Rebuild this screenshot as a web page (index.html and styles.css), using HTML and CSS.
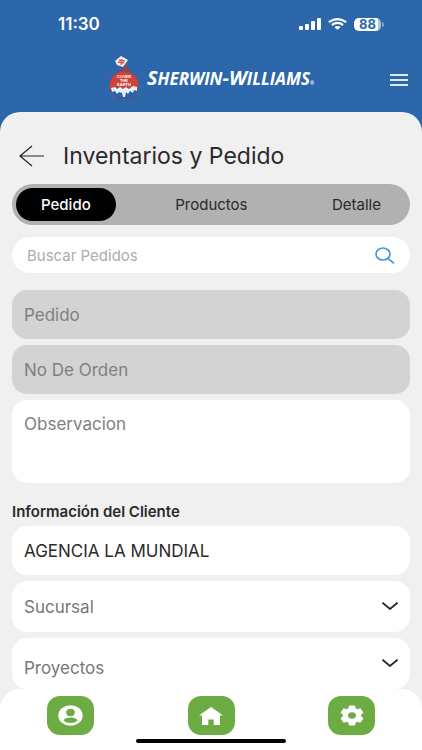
FILE: index.html
```html
<!DOCTYPE html>
<html lang="es">
<head>
<meta charset="utf-8">
<meta name="viewport" content="width=device-width, initial-scale=1">
<title>Inventarios y Pedido</title>
<link rel="stylesheet" href="styles.css">
</head>
<body>
<header class="header">
  <div class="status">
    <span class="time">11:30</span>
    <div class="indicators">
      <svg width="22" height="12" viewBox="0 0 22 12" fill="#fff" aria-hidden="true"><rect x="0" y="8" width="4" height="4" rx="1"/><rect x="6" y="6" width="4" height="6" rx="1"/><rect x="12" y="3" width="4" height="9" rx="1"/><rect x="18" y="0" width="4" height="12" rx="1"/></svg>
      <svg width="19" height="12" viewBox="0 0 19 12" fill="none" stroke="#fff" stroke-width="2.2" aria-hidden="true"><path d="M.8 4.2Q9.500-2 18.200 4.200M3.900 7Q9.500 2.800 15.100 7"/><path d="M6.300 9Q9.500 6.800 12.700 9L9.500 11.800Z" fill="#fff" stroke="none"/></svg>
      <span class="battery">88</span>
    </div>
  </div>
  <div class="brand-row">
    <div class="brand">
      <svg class="emblem" width="32" height="48" viewBox="0 0 32 48" aria-hidden="true">
        <path d="M8 19Q8 14 14 14L16 9 20 9 19 14Q24 14 24 19Z" fill="#8c4660"/>
        <path d="M7 5 13 0 20 4 15 11 9 9Z" fill="#f2eef1"/>
        <path d="M11 4 17 5M10 6 16 7M14 3 13 9" stroke="#cf5b58" stroke-width="1.300"/>
        <circle cx="16" cy="30" r="14" fill="#2464ad" stroke="#6f4f7a"/>
        <path d="M1.500 33Q1 20 10 17Q16 14 23 17Q32 22 30.500 33L27 31 23 33 19 31 14 33 9 31 5 33Z" fill="#cf4236"/>
        <path d="M3 32 7 31 9 33 12 31 15 33 18 31 21 33 25 30 29 31 29 35 26 34 25 37 22 35 20 38 18 36 17 41 15 41 14 37 11 36 9 38 7 35 4 36Z" fill="#e8f0f7"/>
        <path d="M2 36V43M6 40V46M9 43V46M24 43V46M29 37V44" stroke="#5b5a8a"/>
        <g fill="#fff" class="emblem-text" text-anchor="middle"><text x="16" y="22">COVER</text><text x="16" y="26">THE</text><text x="16" y="30">EARTH</text></g>
      </svg>
      <span class="wordmark"><span class="cap">S</span>HERWIN<span class="cap">-W</span>ILLIAMS<span class="dot">®</span></span>
    </div>
    <button class="icon-button" type="button" aria-label="Menú">
      <svg width="18" height="12" viewBox="0 0 18 12" stroke="#dce9f7" stroke-width="2"><path d="M0 1H18M0 6H18M0 11H18"/></svg>
    </button>
  </div>
</header>

<main class="main">
  <div class="title-row">
    <button class="icon-button" type="button" aria-label="Volver">
      <svg width="26" height="22" viewBox="0 0 26 22" fill="none" stroke="#222" stroke-width="1.200"><path d="M25 11H1M13 1 1 11 13 21"/></svg>
    </button>
    <h1 class="title">Inventarios y Pedido</h1>
  </div>

  <div class="tabs">
    <button class="tab active" type="button">Pedido</button>
    <button class="tab" type="button">Productos</button>
    <button class="tab" type="button">Detalle</button>
  </div>

  <div class="search">
    <input class="search-input" type="search" placeholder="Buscar Pedidos" aria-label="Buscar Pedidos">
    <button class="icon-button" type="button" aria-label="Buscar">
      <svg width="20" height="17" viewBox="0 0 20 17" fill="none" stroke="#4599dc" stroke-width="1.700"><ellipse cx="8" cy="7" rx="7" ry="6"/><path d="M13 11.500 19 16.300"/></svg>
    </button>
  </div>

  <form class="form">
    <input class="field" type="text" placeholder="Pedido" aria-label="Pedido" disabled>
    <input class="field" type="text" placeholder="No De Orden" aria-label="No De Orden" disabled>
    <textarea class="field area" placeholder="Observacion" aria-label="Observacion"></textarea>
    <h2 class="section"><label for="client">Información del Cliente</label></h2>
    <input class="field" id="client" type="text" value="AGENCIA LA MUNDIAL">
    <div class="select-wrap">
      <select class="field select" aria-label="Sucursal"><option>Sucursal</option></select>
      <svg class="chevron" width="16" height="8" viewBox="0 0 16 8" fill="none" stroke="#222" stroke-width="1.700"><path d="M.5 .7 8 7 15.500 .7"/></svg>
    </div>
    <div class="select-wrap">
      <select class="field select lowered" aria-label="Proyectos"><option>Proyectos</option></select>
      <svg class="chevron" width="16" height="8" viewBox="0 0 16 8" fill="none" stroke="#222" stroke-width="1.700"><path d="M.5 .7 8 7 15.500 .7"/></svg>
    </div>
  </form>
</main>

<nav class="nav">
  <div class="nav-items">
    <a class="nav-link" href="#" aria-label="Perfil"><svg width="25" height="21" viewBox="0 0 25 21"><ellipse cx="12.500" cy="10.500" rx="12.200" ry="10.200" fill="#fff"/><ellipse cx="12.500" cy="7.500" rx="4.300" ry="3.700" fill="#6cac42"/><path d="M5.500 15.400Q7 12.600 12.500 12.600T19.500 15.400Q17 18 12.500 18T5.500 15.400Z" fill="#6cac42"/></svg></a>
    <a class="nav-link" href="#" aria-label="Inicio"><svg width="24" height="18" viewBox="0 0 24 18" fill="#fff"><path d="M12 0 24 8.500H21V18H14.700V12.500H9.300V18H3V8.500H0Z"/></svg></a>
    <a class="nav-link" href="#" aria-label="Ajustes"><svg width="24" height="21" viewBox="0 0 24 21" fill="#fff" stroke="#fff" stroke-linejoin="round"><path fill-rule="evenodd" d="M9.300 1H14.700L15.300 3.700 17.300 4.700 20.300 3.700 23 7.800 20.700 9.500V11.500L23 13.200 20.300 17.300 17.300 16.300 15.300 17.300 14.700 20H9.300L8.700 17.300 6.700 16.300 3.700 17.300 1 13.200 3.300 11.500V9.500L1 7.800 3.700 3.700 6.700 4.700 8.700 3.700Z"/><ellipse cx="12" cy="10.500" rx="3.900" ry="3.300" fill="#6cac42" stroke="none"/></svg></a>
  </div>
  <div class="home-bar"></div>
</nav>
</body>
</html>
```
FILE: styles.css
```css
* { box-sizing: border-box; }

body {
  margin: 0;
  min-height: 100vh;
  display: flex;
  flex-direction: column;
  background: #f0f0f0;
  color: #2a2a2a;
  font-family: Inter, "Liberation Sans", sans-serif;
}

button, input, select, textarea { font: inherit; color: inherit; }

.header {
  padding: 14px 14px 28px 14px;
  background: #2b67aa;
  color: #fff;
}

.status {
  display: flex;
  justify-content: space-between;
  align-items: center;
  height: 20px;
  padding: 0 24px 0 44px;
}

.time { font-size: 17px; font-weight: 600; }

.indicators { display: flex; align-items: center; gap: 7px; }

.battery {
  position: relative;
  width: 27px;
  margin-right: 3px;
  border-radius: 5px;
  background: linear-gradient(90deg, #fff 88%, #a9c3e0 88%);
  color: #2b67aa;
  font-size: 13px;
  font-weight: 700;
  line-height: 13px;
  text-align: center;
}

.battery::after {
  content: "";
  position: absolute;
  top: 4px;
  right: -3px;
  width: 2px;
  height: 5px;
  border-radius: 0 2px 2px 0;
  background: #7fa5d0;
}

.brand-row {
  display: grid;
  grid-template-columns: 1fr auto 1fr;
  align-items: center;
  margin-top: 22px;
}

.brand { grid-column: 2; display: flex; align-items: center; gap: 7px; }

.brand-row .icon-button { justify-self: end; }

.emblem-text { font: 700 4px "Liberation Sans", sans-serif; }

.wordmark {
  font: italic 700 17px/20px "Open Sans", sans-serif;
  white-space: nowrap;
}

.wordmark .cap { font-size: 20px; }
.wordmark .dot { font-size: 5px; }

.icon-button {
  display: flex;
  padding: 0;
  border: 0;
  background: none;
  cursor: pointer;
}

.main {
  flex: 1;
  margin-top: -20px;
  padding: 28px 12px 0;
  border-radius: 20px 20px 0 0;
  background: #f0f0f0;
}

.title-row { display: flex; align-items: center; gap: 18px; padding-left: 7px; }

.title { margin: 0; font-size: 23px; font-weight: 400; line-height: 32px; }

.tabs {
  display: flex;
  justify-content: space-between;
  height: 41px;
  margin-top: 12px;
  padding: 4px;
  border-radius: 21px;
  background: #b1b1b1;
}

.tab {
  padding: 0 25px;
  border: 0;
  border-radius: 17px;
  background: none;
  font-size: 15px;
  font-weight: 400;
}

.tab.active { background: #000; color: #fff; font-weight: 500; }

.search {
  display: flex;
  align-items: center;
  height: 36px;
  margin-top: 12px;
  padding: 0 15px;
  border-radius: 18px;
  background: #fff;
}

.search-input {
  flex: 1;
  min-width: 0;
  padding: 0;
  border: 0;
  outline: 0;
  background: none;
  font-size: 15px;
}

.search-input::placeholder { color: #adadad; }

.form { display: flex; flex-direction: column; gap: 6px; margin-top: 17px; }

.field {
  display: block;
  width: 100%;
  height: 49px;
  padding: 0 12px;
  border: 0;
  border-radius: 15px;
  background: #fff;
  font-size: 17px;
}

.field::placeholder { color: #808080; opacity: 1; }

.field:disabled { background: #d3d3d3; }

.area { height: 83px; padding-top: 14px; line-height: 20px; resize: none; }

.section { margin: 13px 0 -2px; font-size: 15px; font-weight: 600; line-height: 20px; }

.select-wrap { position: relative; }

.select { height: 51px; appearance: none; color: #777; }

.lowered { padding-top: 8px; }

.chevron {
  position: absolute;
  top: 21px;
  right: 12px;
  pointer-events: none;
}

.nav {
  position: sticky;
  bottom: 0;
  padding: 7px 47px;
  border-radius: 20px 20px 0 0;
  background: #fff;
}

.nav-items { display: flex; justify-content: space-between; }

.nav-link {
  display: flex;
  align-items: center;
  justify-content: center;
  width: 47px;
  height: 39px;
  border-radius: 13px;
  background: #6cac42;
}

.home-bar {
  width: 46%;
  min-width: 150px;
  height: 4px;
  margin: 4px auto 0;
  border-radius: 2px;
  background: #000;
}
```
